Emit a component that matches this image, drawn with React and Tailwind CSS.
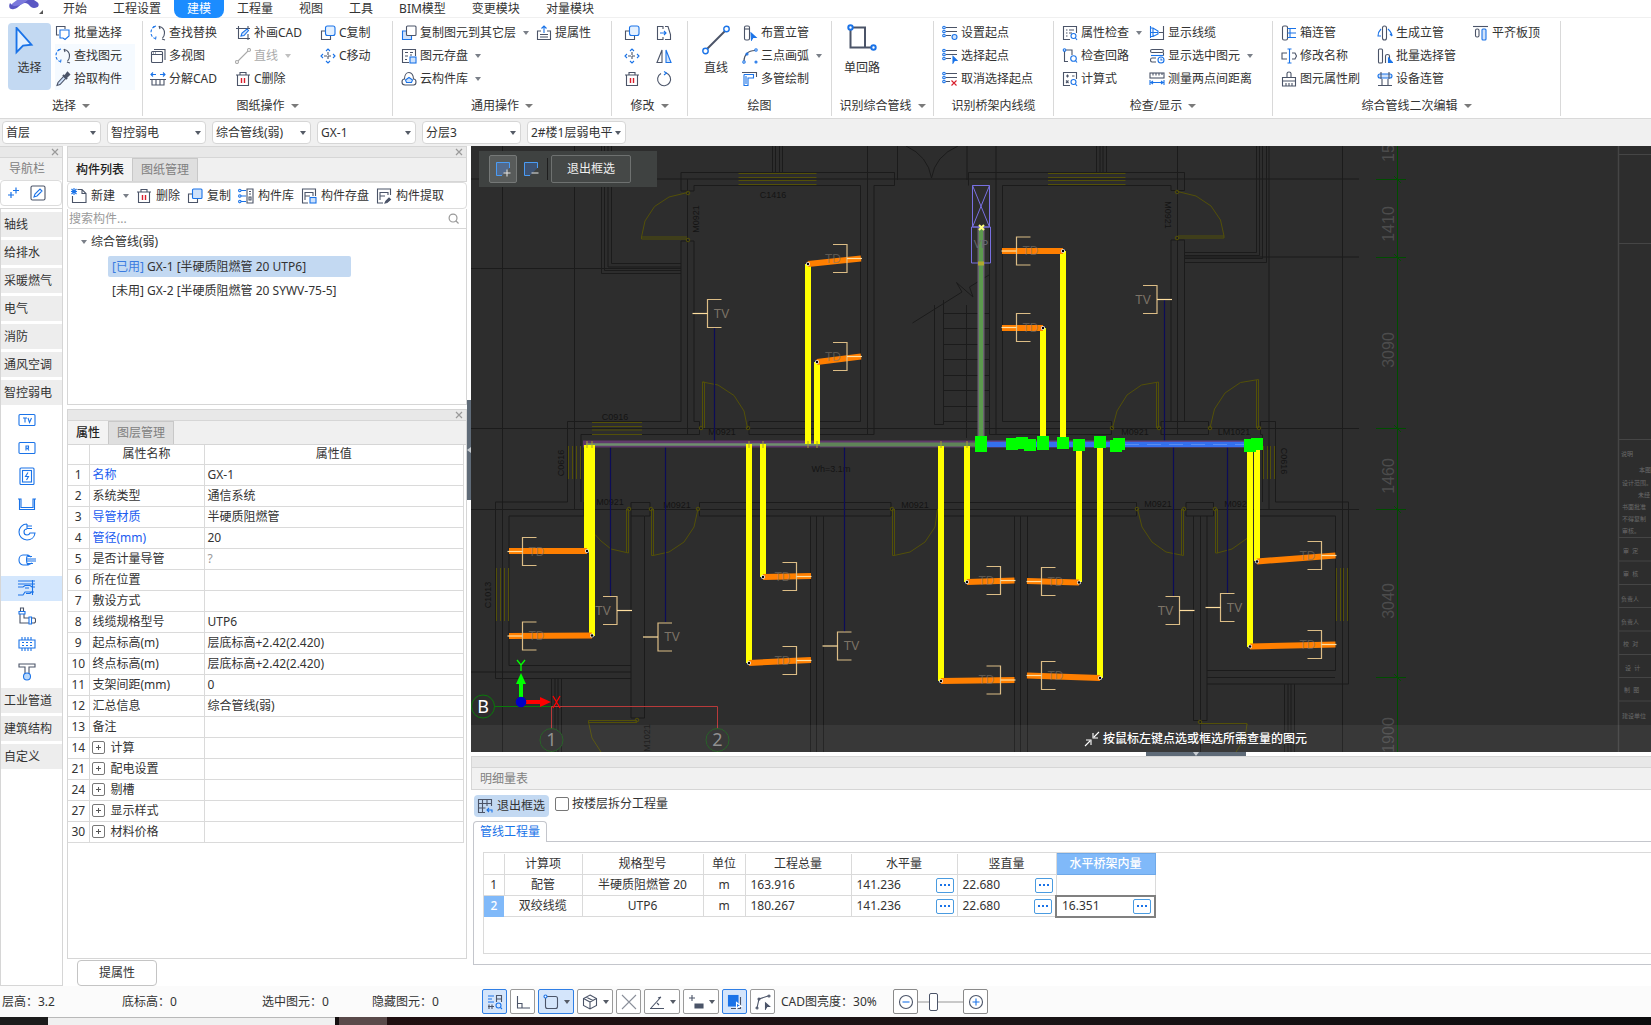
import { useState } from "react"

/* -----------------------------
   Icons (16 x 16 grid)
----------------------------- */
const G = "#4b5468"
const B = "#1a73e8"
const L = "#cfe2fb"

const GLYPHS = {
  batch: (
    <>
      <path d="M4 10H1.5V1.5H10V4" />
      <path d="M5 5h9v6l-4 3.5L8 13H5z" stroke={B} />
    </>
  ),
  find: (
    <>
      <path d="M5 1.5C2 2.5 1 5 1 7.500c0 3 1.500 5 4 6" stroke={B} strokeDasharray="3 1.500" />
      <path d="M3 2l3-1M5.500 14.500L6 11.500" stroke={B} />
      <path d="M9.500 1.500C13 2.500 14.500 5 14.500 8s-1 4-2 5M9 1l1 3M12 14l3 1" />
    </>
  ),
  dropper: (
    <>
      <path d="M2 14.500l1-3 6-6.500 2 2-6 6.500z" fill={L} />
      <path d="M8 4l4 4M10 5.500l2.500-3.500 1.500 1.500-3 3z" strokeWidth="2.200" />
    </>
  ),
  windows: (
    <>
      <path d="M4 1.500h11V12" />
      <rect x="1.500" y="3.500" width="11" height="11" rx="1" />
      <path d="M1.500 6.500h11M3 5h1M5 5h1" />
    </>
  ),
  explode: (
    <>
      <path d="M1 3.500h5M10 3.500h5M3 1.500l-2 2 2 2M13 1.500l2 2-2 2" stroke={B} />
      <path d="M0 8.500h16M2 8.500V14h12V8.500M6 8.500V14M10 8.500V14" />
    </>
  ),
  patch: (
    <>
      <path d="M1 3.500h14M3.500 1v13M13 1v2M3.500 13.500H15M13 9v6" />
      <path d="M6 11l1-3 5-4 1.500 1.500L9 10.500z" stroke={B} fill={L} />
    </>
  ),
  lineGray: (
    <>
      <path d="M3 13L13 3" stroke="#aaa" />
      <circle cx="2" cy="14" r="1.500" stroke="#aaa" />
      <circle cx="14" cy="2" r="1.500" stroke="#aaa" />
    </>
  ),
  trash: (
    <>
      <path d="M1 4h14M5 4V1.500h6V4M2.500 4v10.500h11V4" />
      <path d="M6.500 7v5M9.500 7v5" stroke="#d81e2c" strokeWidth="1.400" />
    </>
  ),
  copy: (
    <>
      <path d="M5 6H1.500v8.500h9V11" />
      <rect x="5.500" y="1" width="9.500" height="9.500" rx="2" stroke={B} fill="#e3f0ff" />
    </>
  ),
  copyDown: (
    <>
      <path d="M5 6H1.500v8.500h9V11" fill={L} stroke={B} />
      <rect x="5.500" y="1" width="9.500" height="9.500" rx="1" fill="#fff" />
    </>
  ),
  copyItem: (
    <>
      <path d="M5 6H1.500v8.500h9V11" />
      <rect x="5.500" y="1" width="9.500" height="9.500" rx="1" stroke={B} fill={L} />
    </>
  ),
  move: (
    <>
      <path d="M8 4v8M4 8h8" strokeDasharray="3 1" />
      <path d="M6 3l2-2 2 2M6 13l2 2 2-2M3 6L1 8l2 2M13 6l2 2-2 2" stroke={B} />
    </>
  ),
  saveList: (
    <>
      <path d="M8 14.500H1.500v-13h13V8M4 4.500h3M4 8h3M4 11.500h2M9 4.500h3M9 7h2" />
      <rect x="9" y="9" width="6" height="6" stroke={B} fill={L} />
    </>
  ),
  cloud: (
    <>
      <path d="M4 14h8.500c2 0 2.500-1.500 2.500-3 0-1.500-1-3-2.500-3C12.500 4 10.500 1.500 8 1.500S3.500 4 3.500 8C2 8 1 9.500 1 11s1 3 3 3z" />
      <path d="M5.500 11.500h5l1-2.500-3.500-2.500L4.500 9z" stroke={B} fill={L} />
    </>
  ),
  extract: (
    <>
      <path d="M5 6H1.500v8.500h13V6H11M4 9.500h8M4 12h8" />
      <path d="M8 8V1M5.500 3.500L8 1l2.500 2.500" stroke={B} />
    </>
  ),
  stretch: (
    <>
      <path d="M7 4V1.500H1.500v13H7V12M9 1.500h3l2.500 8v5H9" />
      <path d="M4 8h6M8 6l2 2-2 2" stroke={B} />
    </>
  ),
  mirror: (
    <>
      <path d="M6 2v12.500H1z" />
      <path d="M10 2v12.500h5z" stroke={B} fill={L} />
    </>
  ),
  rotate: (
    <>
      <path d="M10 2a6.500 6.500 0 1 1-5 .500" />
      <path d="M8 .500L10.500 2 8 4" stroke={B} />
    </>
  ),
  riser: (
    <>
      <rect x="2.500" y="1" width="5" height="14" rx="1.500" />
      <path d="M2.500 4h5" />
      <path d="M9 8l5 4.500H11L9.500 15z" fill={B} stroke={B} />
    </>
  ),
  arc: (
    <>
      <path d="M2 13C2 7 6 2.500 13 2.500" />
      <circle cx="14" cy="2" r="1.200" stroke={B} />
      <circle cx="2" cy="14" r="1.200" stroke={B} />
      <circle cx="14" cy="14" r="1" stroke={B} />
      <circle cx="5" cy="6" r="1" stroke={B} />
    </>
  ),
  multi: (
    <>
      <path d="M0 1.500h14M14.500 1v5" />
      <path d="M2 3.500v11h4V7h5.500V3.500H2M4 5v8" stroke={B} />
    </>
  ),
  setStart: (
    <>
      <path d="M4 2.500h11M4 6.500h11M4 10.500h5" />
      <circle cx="2" cy="2.500" r="1.300" stroke={B} />
      <circle cx="2" cy="6.500" r="1.300" stroke={B} />
      <circle cx="2" cy="10.500" r="1.300" stroke={B} />
      <circle cx="12.500" cy="12" r="2.500" stroke={B} fill={L} />
    </>
  ),
  pickStart: (
    <>
      <path d="M4 2.500h11M4 6.500h11M4 10.500h5" />
      <circle cx="2" cy="2.500" r="1.300" stroke={B} />
      <circle cx="2" cy="6.500" r="1.300" stroke={B} />
      <circle cx="2" cy="10.500" r="1.300" stroke={B} />
      <path d="M11 8.500l4 4h-2.500L11 15z" fill={B} stroke={B} />
    </>
  ),
  dropStart: (
    <>
      <path d="M4 2.500h11M4 6.500h11M4 10.500h4" />
      <circle cx="2" cy="2.500" r="1.300" stroke={B} />
      <circle cx="2" cy="6.500" r="1.300" stroke={B} />
      <circle cx="2" cy="10.500" r="1.300" stroke={B} />
      <path d="M9.500 9.500l5 5M14.500 9.500l-5 5" stroke="#d81e2c" />
    </>
  ),
  checkAttr: (
    <>
      <path d="M8 14.500H1.500v-13h13V8M4 5h1.500M7 5h5M4 8h1.500M7 8h3M4 11h1.500" />
      <circle cx="11.500" cy="11" r="2.500" stroke={B} />
      <path d="M13.500 13l1.500 2" stroke={B} />
    </>
  ),
  checkLoop: (
    <>
      <path d="M2.500 3v10.500H6M4 2h6v5" />
      <circle cx="2.500" cy="2" r="1.300" stroke={B} />
      <circle cx="11.500" cy="10.500" r="2.800" stroke={B} />
      <path d="M13.500 12.500l1.500 2" stroke={B} />
    </>
  ),
  calc: (
    <>
      <path d="M8 14.500H1.500v-13h13V8M4 5h3M5.500 3.500v3M10 5h2.500M4 9.500l2.500 2.500M6.500 9.500L4 12" />
      <circle cx="11.500" cy="11" r="2.500" stroke={B} />
      <path d="M13.500 13l1.500 2" stroke={B} />
    </>
  ),
  cable: (
    <>
      <path d="M14.500 1v14M1 14.500h13.500M10 7.500h4.500" />
      <path d="M1.500 1v12M4 3v8.500M1.500 3H4l5 3v3l-5 2.500H1.500M2 7.500h7" stroke={B} />
    </>
  ),
  showSel: (
    <>
      <rect x="1.500" y="1.500" width="13" height="3" rx="1.500" />
      <path d="M2 7.500h12.500" stroke={B} />
      <path d="M7 10H3c-2 0-2 4 0 4h4M14.500 4.500v3" />
      <circle cx="12" cy="12" r="3" stroke={B} />
      <path d="M12 10.500V12h1.500" stroke={B} />
    </>
  ),
  measure: (
    <>
      <rect x="1" y="2" width="14" height="5" />
      <path d="M4 2v2.500M7 2v2.500M10 2v2.500M13 2v2" />
      <path d="M1 9v5M15 9v5M2 11.500h12M4 10l-2 1.500L4 13M12 10l2 1.500-2 1.500" stroke={B} />
    </>
  ),
  boxPipe: (
    <>
      <rect x="1.500" y="1" width="5" height="14" rx="1.500" />
      <path d="M6.500 3.500H15M6.500 8H15M6.500 12.500H15M9 3.500v9" stroke={B} />
    </>
  ),
  rename: (
    <>
      <path d="M6 5H1v6h5M11 5h3l1.500 3L14 11h-3" />
      <path d="M8.500 1v14M6.500 1h4M6.500 15h4" stroke={B} />
    </>
  ),
  brush: <path d="M6 6V2.500c0-2 4-2 4 0V6M1.500 10V6.500h13V10zM1.500 10v5h13v-5M5 12v3M8 12v3M11 12v3" />,
  genRiser: (
    <>
      <rect x="5.500" y="1" width="4" height="14" rx="2" />
      <path d="M4 4C1 7 1 9 1 11h3M11 4c2 2 4 4 4 7M13 9l2 2" stroke={B} />
    </>
  ),
  batchPipe: (
    <>
      <rect x="1.500" y="1" width="4" height="14" rx="1" />
      <path d="M8.500 15V8c0-2 4-2 4 0v3" />
      <path d="M11.500 10l4 4.500h-4z" fill={B} stroke={B} />
    </>
  ),
  devicePipe: (
    <>
      <rect x="1" y="3" width="14" height="4" rx="2" stroke={B} fill={L} />
      <path d="M4 1v7M12 1v7M5 8v6M11 8v6M1 14.500h14" />
    </>
  ),
  alignTop: (
    <>
      <path d="M0 1.500h15" />
      <rect x="2.500" y="4" width="3.500" height="8" rx="1.500" />
      <rect x="9" y="4" width="4" height="11" rx="1" stroke={B} fill={L} />
    </>
  ),
  newItem: (
    <>
      <path d="M6.500 1.500H11l4 4v9H1.500V8M11 1.500v4h4" />
      <path d="M.500 1l5 5M5.500 1l-5 5M3 0v7M0 3.500h6" stroke={B} />
    </>
  ),
  library: (
    <>
      <path d="M9 1h6v14H9zM11 3.500h2M11 6h2M11 9h2v3h-2z" />
      <path d="M3 2.500h5M3 8h5M3 13.500h5" stroke={B} />
      <circle cx="1.800" cy="2.500" r="1.200" stroke={B} />
      <circle cx="1.800" cy="8" r="1.200" stroke={B} />
      <circle cx="1.800" cy="13.500" r="1.200" stroke={B} />
    </>
  ),
  store: (
    <>
      <path d="M7 15H1.500V1h13v7M4 12V4.500h8V8M4 8h5" />
      <rect x="9" y="9.500" width="6" height="5.500" stroke={B} fill={L} />
    </>
  ),
  pull: (
    <>
      <path d="M7 15H1.500V1h13v6M4 12V4.500h8V7M4 8h5" />
      <path d="M9 15l1-2 3-3 1.500 1.500-3.500 3z" fill={G} />
    </>
  ),
  exitBox: (
    <>
      <path d="M8 14.500H1.500v-13h13V8M1.500 5.500h13M1.500 10h7M5.500 1.500v13M10 1.500V8" />
      <path d="M15 14.500V12h-5M12 10l-2 2 2 2" stroke={B} />
    </>
  ),
  magnet: (
    <>
      <path d="M1 2h6M1 5h4M1 8h6" stroke={B} />
      <path d="M9.500 8V1.500h5V8M9.500 5h5M2 10.500v4.500M5 10.500v4.500M1 12.500h6" />
      <circle cx="11.500" cy="11.500" r="2.500" stroke={B} />
      <path d="M13.500 13.500l1.500 1.500" stroke={B} />
    </>
  ),
  ortho: <path d="M2.500 2v12H15M2.500 9.500H7V14" />,
  rectSel: (
    <>
      <rect x="2.500" y="2.500" width="12" height="12" rx="2" />
      <circle cx="2.500" cy="2.500" r="1.500" stroke={B} fill="#fff" />
    </>
  ),
  cube: <path d="M8 1l6.500 3.500v7L8 15l-6.500-3.500v-7zM8 8L1.500 4.500M8 8l6.500-3.500M8 8v7M4 3l7 3.500" />,
  cross: <path d="M1 1l14 14M15 1L1 15" stroke="#8a8f9a" />,
  angle: <path d="M1 14.500h14M2 14L12 3M8 9l2 2M12 3l-3 1" />,
  plusBar: (
    <>
      <path d="M1 4h6M4 1v6" />
      <path d="M7 10h8v4H7z" fill={G} />
    </>
  ),
  layerSel: (
    <>
      <path d="M4 14.500h9.500V3" />
      <rect x="1.500" y="1.500" width="9.500" height="10.500" fill={B} stroke={B} />
      <path d="M9.500 8.500l5 4h-3l-2 2.500z" fill={B} stroke="#fff" />
    </>
  ),
  polySel: (
    <>
      <path d="M2 14l2-9 9-3" />
      <circle cx="2" cy="14" r="1" />
      <circle cx="4" cy="5" r="1" />
      <circle cx="14" cy="2" r="1" />
      <path d="M10.500 9l4 3.500h-2.500L10.500 15z" fill={G} />
    </>
  ),
  zoomOut: (
    <>
      <circle cx="8" cy="8" r="6.500" />
      <path d="M4.500 8h7" stroke={B} />
    </>
  ),
  zoomIn: (
    <>
      <circle cx="8" cy="8" r="6.500" />
      <path d="M4.500 8h7M8 4.500v7" stroke={B} />
    </>
  ),
}

const NAV_GLYPHS = {
  tv: (
    <>
      <rect x="1" y="3.500" width="16" height="11" rx="1" />
      <path d="M5 7h4M7 7v4.500M10 7l1.500 4.500L13.500 7" />
    </>
  ),
  r: (
    <>
      <rect x="1" y="3.500" width="16" height="11" rx="1" />
      <path d="M8 11.500V7h2.500v2.300H8M9.500 9.500l1.500 2" />
    </>
  ),
  power: (
    <>
      <rect x="2" y="1" width="14" height="16.500" rx="1" />
      <rect x="4.500" y="3.500" width="9" height="11.500" />
      <path d="M10 5.500L7.500 9.500h3L8.500 13" />
    </>
  ),
  tray: <path d="M0 4h3v8.500h12V4h3M1.500 4v10.500h15V4" />,
  coil: <path d="M9 1c-4.500 0-8 3.500-8 8s3.500 8 8 8c4 0 7.500-2.500 8-7h-5c-.5 1.500-1.500 2-3 2-2 0-3-1.500-3-3s1-3 3-3M9 1v5M9 3h5M9 5.500h5" />,
  hand: <path d="M10 4H5C2.500 4 1 6.500 1 9s1.500 5 4 5h5M10 4c-2 2-2 8 0 10M10 5.500h4M9 8h9M9 10h9M9 12.500h6M10 4l3 2M10 14l4-2" />,
  lines: <path d="M0 2h17M0 5h17M0 8h5l2-1.500h5L14 8h3M7 9h4M0 16h5l2-3h9M8 14.500h4l2-2M14.500 1v15" />,
  elbow: (
    <>
      <path d="M2 7v9h9M6 7v4h5M2.500 5V1h3v4M14 11h2.500l1 1v3l-1 1H14" stroke={G} />
      <path d="M1 4.500h6V7H1zM11 10h2.500v7H11z" />
    </>
  ),
  chip: <path d="M1 5h16v8H1zM4 2v3M7 2v3M10 2v3M13 2v3M4 13v3M7 13v3M10 13v3M13 13v3M4 7.500h2M8 7.500h2M12 7.500h2M4 10.500h2M8 10.500h2M12 10.500h2" />,
  support: (
    <>
      <path d="M1 1h16v3h-6v7H7V4H1z" stroke={G} />
      <circle cx="9" cy="13.500" r="3.500" fill="#b9d8fb" />
    </>
  ),
}

function Icon({ name }) {
  return (
    <svg viewBox="0 0 16 16" className="h-4 w-4 shrink-0" fill="none" stroke={G} strokeWidth="1.100">
      {GLYPHS[name]}
    </svg>
  )
}

function Caret({ className = "h-1 w-1.5 text-[#7a7f88]" }) {
  return (
    <svg viewBox="0 0 6 4" preserveAspectRatio="none" className={`shrink-0 ${className}`} fill="currentColor">
      <path d="M0 0h6L3 4z" />
    </svg>
  )
}

function CloseX() {
  return (
    <button aria-label="关闭" className="flex h-2 w-2 items-center text-[#9a9a9a]">
      <svg viewBox="0 0 8 8" className="h-2 w-2" stroke="currentColor" strokeWidth="1.200">
        <path d="M1 1l6 6M7 1L1 7" />
      </svg>
    </button>
  )
}

/* -----------------------------
   Ribbon
----------------------------- */
const MENU = ["开始", "工程设置", "建模", "工程量", "视图", "工具", "BIM模型", "变更模块", "对量模块"]

function Tool({ icon, label, menu, disabled, className = "" }) {
  return (
    <button
      disabled={disabled}
      aria-label={label || icon}
      className={`flex h-[23px] items-center gap-[3px] whitespace-nowrap text-left ${disabled ? "text-[#aaaaaa]" : ""} ${className}`}
    >
      <Icon name={icon} />
      {label && <span>{label}</span>}
      {menu && <Caret className={disabled ? "ml-1 h-1 w-1.5 text-[#c0c0c0]" : "ml-1 h-1 w-1.5 text-[#7a7f88]"} />}
    </button>
  )
}

function Group({ title, menu, width, children }) {
  return (
    <section className={`flex shrink-0 flex-col pt-[3px] ${width}`}>
      <div className="flex h-[95px] flex-col justify-between border-r border-[#d9d9d9]">
        <div className="flex h-[69px]">{children}</div>
        <div className="flex h-5 items-center justify-center gap-[6px]">
          {title}
          {menu && <Caret className="h-1 w-2 text-[#7a7a7a]" />}
        </div>
      </div>
    </section>
  )
}

function Col({ width = "", tools }) {
  return (
    <div className={`flex shrink-0 flex-col ${width}`}>
      {tools.map((t) => (
        <Tool key={t.icon + (t.label || "")} {...t} />
      ))}
    </div>
  )
}

function Ribbon() {
  return (
    <div className="flex h-[101px] overflow-hidden border-b border-[#d9d9d9] bg-white">
      <Group title="选择" menu width="w-[143px]">
        <button className="ml-2 mt-0.5 flex h-[67px] w-[43px] shrink-0 flex-col items-center justify-between rounded bg-[#c3d9f2] pb-3.5 pt-1">
          <svg viewBox="0 0 24 30" className="ml-1 h-7 w-6 self-start" fill="#e3f0ff" stroke={B} strokeWidth="2">
            <path d="M4 1l16 18-9 1-7 7z" />
          </svg>
          <span className="leading-[16px]">选择</span>
        </button>
        <div className="ml-1 flex flex-col">
          <Tool icon="batch" label="批量选择" />
          <Tool icon="find" label="查找图元" className="w-20 bg-[#f5faff]" />
          <Tool icon="dropper" label="拾取构件" className="w-20 bg-[#f5faff]" />
        </div>
      </Group>

      <Group title="图纸操作" menu width="w-[250px]">
        <Col
          width="ml-[7px] w-[85px]"
          tools={[
            { icon: "find", label: "查找替换" },
            { icon: "windows", label: "多视图" },
            { icon: "explode", label: "分解CAD" },
          ]}
        />
        <Col
          width="w-[85px]"
          tools={[
            { icon: "patch", label: "补画CAD" },
            { icon: "lineGray", label: "直线", menu: true, disabled: true },
            { icon: "trash", label: "C删除" },
          ]}
        />
        <Col
          tools={[
            { icon: "copy", label: "C复制" },
            { icon: "move", label: "C移动" },
          ]}
        />
      </Group>

      <Group title="通用操作" menu width="w-[219px]">
        <Col
          width="ml-2 w-[135px]"
          tools={[
            { icon: "copyDown", label: "复制图元到其它层", menu: true },
            { icon: "saveList", label: "图元存盘", menu: true },
            { icon: "cloud", label: "云构件库", menu: true },
          ]}
        />
        <Col tools={[{ icon: "extract", label: "提属性" }]} />
      </Group>

      <Group title="修改" menu width="w-[76px]">
        <Col width="ml-3 w-8" tools={[{ icon: "copy" }, { icon: "move" }, { icon: "trash" }]} />
        <Col tools={[{ icon: "stretch" }, { icon: "mirror" }, { icon: "rotate" }]} />
      </Group>

      <Group title="绘图" width="w-[144px]">
        <button className="ml-[9px] flex w-[38px] shrink-0 flex-col items-center justify-between pb-3.5 pt-1">
          <svg viewBox="0 0 28 30" className="h-[30px] w-7" fill="none" stroke={G} strokeWidth="2">
            <path d="M5 24L23 6" />
            <circle cx="3.500" cy="26" r="2.700" stroke={B} strokeWidth="1.400" />
            <circle cx="24.500" cy="4" r="2.700" stroke={B} strokeWidth="1.400" />
          </svg>
          <span className="leading-[16px]">直线</span>
        </button>
        <Col
          width="ml-[7px]"
          tools={[
            { icon: "riser", label: "布置立管" },
            { icon: "arc", label: "三点画弧", menu: true },
            { icon: "multi", label: "多管绘制" },
          ]}
        />
      </Group>

      <Group title="识别综合管线" menu width="w-[102px]">
        <button className="ml-[9px] flex w-[42px] shrink-0 flex-col items-center justify-between pb-3.5 pt-[3px]">
          <svg viewBox="0 0 30 30" className="h-[30px] w-[30px]" fill="none" stroke={G} strokeWidth="2">
            <path d="M3.500 3v20.500H26M3.500 3.500h14.500v20" />
            <circle cx="3.500" cy="3.500" r="2.200" stroke={B} fill="#fff" />
            <circle cx="26.500" cy="23.500" r="2.200" stroke={B} fill="#fff" />
          </svg>
          <span className="leading-[16px]">单回路</span>
        </button>
      </Group>

      <Group title="识别桥架内线缆" width="w-[120px]">
        <Col
          width="ml-2"
          tools={[
            { icon: "setStart", label: "设置起点" },
            { icon: "pickStart", label: "选择起点" },
            { icon: "dropStart", label: "取消选择起点" },
          ]}
        />
      </Group>

      <Group title="检查/显示" menu width="w-[219px]">
        <Col
          width="ml-2 w-[87px]"
          tools={[
            { icon: "checkAttr", label: "属性检查", menu: true },
            { icon: "checkLoop", label: "检查回路" },
            { icon: "calc", label: "计算式" },
          ]}
        />
        <Col
          tools={[
            { icon: "cable", label: "显示线缆" },
            { icon: "showSel", label: "显示选中图元", menu: true },
            { icon: "measure", label: "测量两点间距离" },
          ]}
        />
      </Group>

      <Group title="综合管线二次编辑" menu width="w-[288px]">
        <Col
          width="ml-2 w-24"
          tools={[
            { icon: "boxPipe", label: "箱连管" },
            { icon: "rename", label: "修改名称" },
            { icon: "brush", label: "图元属性刷" },
          ]}
        />
        <Col
          width="w-24"
          tools={[
            { icon: "genRiser", label: "生成立管" },
            { icon: "batchPipe", label: "批量选择管" },
            { icon: "devicePipe", label: "设备连管" },
          ]}
        />
        <Col tools={[{ icon: "alignTop", label: "平齐板顶" }]} />
      </Group>
    </div>
  )
}

const FILTERS = [
  ["楼层", "首层"],
  ["专业", "智控弱电"],
  ["构件类型", "综合管线(弱)"],
  ["构件", "GX-1"],
  ["分层", "分层3"],
  ["图纸", "2#楼1层弱电平"],
]

function FilterBar() {
  return (
    <div className="flex h-[27px] items-center gap-[6px] bg-[#f0f0f0] pl-0.5">
      {FILTERS.map(([name, value]) => (
        <div key={name} className="relative">
          <select
            aria-label={name}
            className="h-[23px] w-[99px] appearance-none rounded border border-[#d6d6d6] bg-white pl-[3px] pr-3 text-[12px] leading-[16px]"
          >
            <option>{value}</option>
          </select>
          <span className="pointer-events-none absolute right-[5px] top-[10px] flex">
            <Caret className="h-1 w-1.5 text-[#555b66]" />
          </span>
        </div>
      ))}
    </div>
  )
}

/* -----------------------------
   Navigation column
----------------------------- */
const NAV_TOP = ["轴线", "给排水", "采暖燃气", "电气", "消防", "通风空调", "智控弱电"]
const NAV_BOTTOM = ["工业管道", "建筑结构", "自定义"]

function NavColumn() {
  return (
    <nav className="flex w-[63px] shrink-0 flex-col border-r border-[#d6d6d6] bg-white">
      <div className="flex h-3 items-center justify-end border-y border-[#d6d6d6] bg-[#e8e8e8] pr-[3px]">
        <CloseX />
      </div>
      <div className="h-[22px] bg-[#f0f0f0] pl-[9px] leading-[22px] text-[#808080]">导航栏</div>
      <div className="flex h-[26px] items-center gap-[9px] rounded border border-[#dcdcdc] pl-[6px]">
        <button aria-label="展开" className="flex">
          <svg viewBox="0 0 14 14" className="h-3.5 w-3.5" stroke={B} strokeWidth="1.200">
            <path d="M1 9h6M4 6v6M6 4.500h6M9 1.500v6" />
          </svg>
        </button>
        <button aria-label="编辑" className="flex">
          <svg viewBox="0 0 16 16" className="h-4 w-4" fill="none" stroke={G} strokeWidth="1.100">
            <rect x="1" y="1" width="14" height="14" rx="1.500" />
            <path d="M4 12l1-3 5-5 2 2-5 5z" stroke={B} />
          </svg>
        </button>
      </div>
      <div className="mt-0.5 flex flex-1 flex-col gap-[3px] border-b border-l border-t border-[#d6d6d6] pt-[3px]">
        {NAV_TOP.map((n) => (
          <button key={n} className="h-[25px] bg-[#ededed] pl-[3px] text-left">{n}</button>
        ))}
        {Object.keys(NAV_GLYPHS).map((k) => (
          <button
            key={k}
            aria-label={k}
            className={`flex h-[25px] items-center pb-0.5 pl-[17px] ${k === "lines" ? "bg-[#d4e7fd]" : ""}`}
          >
            <svg viewBox="0 0 18 18" className="h-[18px] w-[18px]" fill="none" stroke={B} strokeWidth="1.100">
              {NAV_GLYPHS[k]}
            </svg>
          </button>
        ))}
        {NAV_BOTTOM.map((n) => (
          <button key={n} className="h-[25px] bg-[#ededed] pl-[3px] text-left">{n}</button>
        ))}
      </div>
    </nav>
  )
}

/* -----------------------------
   Component list + properties
----------------------------- */
function PanelTabs({ tabs }) {
  return (
    <>
      <div className="flex h-3 items-center justify-end border border-[#d6d6d6] bg-[#e8e8e8] pr-[3px]">
        <CloseX />
      </div>
      <div className="flex h-6 border-x border-b border-[#d6d6d6] bg-[#f0f0f0]">
        {tabs.map((t, i) => (
          <button
            key={t}
            className={
              i === 0
                ? "border-r border-[#c8c8c8] bg-[#f3f3f3] px-2 font-medium text-[#222]"
                : "border-r border-t border-[#c8c8c8] bg-[#dfdfdf] px-2 text-[#808080]"
            }
          >
            {t}
          </button>
        ))}
      </div>
    </>
  )
}

function ComponentPanel() {
  return (
    <section>
      <PanelTabs tabs={["构件列表", "图纸管理"]} />
      <div className="flex h-[27px] items-center gap-[7px] rounded border border-[#dcdcdc] pl-[3px]">
        <button className="flex items-center gap-1">
          <Icon name="newItem" />
          新建
          <Caret className="ml-1 h-1 w-1.5 text-[#7a7f88]" />
        </button>
        <button className="flex items-center gap-1"><Icon name="trash" />删除</button>
        <button className="flex items-center gap-1"><Icon name="copyItem" />复制</button>
        <button className="flex items-center gap-1"><Icon name="library" />构件库</button>
        <button className="flex items-center gap-1"><Icon name="store" />构件存盘</button>
        <button className="flex items-center gap-1"><Icon name="pull" />构件提取</button>
      </div>
      <div className="flex h-5 items-center border-x border-b border-[#d6d6d6] pr-[7px]">
        <input
          aria-label="搜索构件"
          placeholder="搜索构件..."
          className="h-[18px] flex-1 pl-px text-[12px] outline-none placeholder:text-[#9a9a9a]"
        />
        <svg viewBox="0 0 12 12" className="h-[11px] w-[11px]" fill="none" stroke="#999" strokeWidth="1.300">
          <circle cx="5.500" cy="5.500" r="4.300" />
          <path d="M8.500 8.500l3 3" />
        </svg>
      </div>
      <ul className="h-44 border-x border-b border-[#d6d6d6] pt-px">
        <li className="flex h-6 items-center gap-1 pl-[13px]">
          <Caret />
          综合管线(弱)
        </li>
        <li className="flex h-6 items-center pl-10">
          <div className="w-[243px] rounded-xs bg-[#c3d9f2] pl-1 leading-[21px]">
            <span className="text-[#3a7be0]">[已用]</span> GX-1 [半硬质阻燃管 20 UTP6]
          </div>
        </li>
        <li className="flex h-6 items-center pl-10">
          <div className="pl-1 leading-[21px]">[未用] GX-2 [半硬质阻燃管 20 SYWV-75-5]</div>
        </li>
      </ul>
    </section>
  )
}

const PROPS = [
  { no: 1, name: "名称", value: "GX-1", key: true },
  { no: 2, name: "系统类型", value: "通信系统" },
  { no: 3, name: "导管材质", value: "半硬质阻燃管", key: true },
  { no: 4, name: "管径(mm)", value: "20", key: true },
  { no: 5, name: "是否计量导管", value: "?", muted: true },
  { no: 6, name: "所在位置", value: "" },
  { no: 7, name: "敷设方式", value: "" },
  { no: 8, name: "线缆规格型号", value: "UTP6" },
  { no: 9, name: "起点标高(m)", value: "层底标高+2.42(2.420)" },
  { no: 10, name: "终点标高(m)", value: "层底标高+2.42(2.420)" },
  { no: 11, name: "支架间距(mm)", value: "0" },
  { no: 12, name: "汇总信息", value: "综合管线(弱)" },
  { no: 13, name: "备注", value: "" },
  { no: 14, name: "计算", group: true },
  { no: 21, name: "配电设置", group: true },
  { no: 24, name: "剔槽", group: true },
  { no: 27, name: "显示样式", group: true },
  { no: 30, name: "材料价格", group: true },
]

function PropertyPanel() {
  return (
    <section className="mt-1 flex flex-1 flex-col">
      <PanelTabs tabs={["属性", "图层管理"]} />
      <div className="flex-1 border-x border-b border-[#d6d6d6] pr-[2px]">
        <table className="w-full table-fixed border-collapse leading-[16px]">
          <colgroup>
            <col className="w-[21px]" />
            <col className="w-[115px]" />
            <col />
          </colgroup>
          <thead>
            <tr className="h-[19px]">
              <th className="border-b border-r border-[#dadada]" />
              <th className="border-b border-r border-[#dadada] font-normal">属性名称</th>
              <th className="border-b border-r border-[#dadada] font-normal">属性值</th>
            </tr>
          </thead>
          <tbody>
            {PROPS.map((p) => (
              <tr key={p.no} className="h-[21px]">
                <td className="border-b border-r border-[#dadada] text-center">{p.no}</td>
                <td
                  className={`border-b border-r border-[#dadada] ${p.group ? "pl-0.5" : "pl-[3px]"} ${p.key ? "text-[#1a5cf0]" : ""}`}
                >
                  {p.group ? (
                    <span className="flex items-center gap-[6px]">
                      <button
                        aria-label={`展开${p.name}`}
                        className="flex h-[13px] w-[13px] items-center justify-center rounded-xs border border-[#777]"
                      >
                        <svg viewBox="0 0 7 7" className="h-[7px] w-[7px]" stroke="#555" strokeWidth="1">
                          <path d="M1 3.500h5M3.500 1v5" />
                        </svg>
                      </button>
                      {p.name}
                    </span>
                  ) : (
                    p.name
                  )}
                </td>
                <td className={`border-b border-r border-[#dadada] pl-[3px] ${p.muted ? "text-[#999]" : ""}`}>{p.value}</td>
              </tr>
            ))}
          </tbody>
        </table>
      </div>
      <div className="flex h-[27px] items-end pl-[10px]">
        <button className="h-[26px] w-20 rounded border border-[#c4c4c4] bg-white">提属性</button>
      </div>
    </section>
  )
}

/* -----------------------------
   Drawing area
----------------------------- */
const WALLS = [
  // axis grid
  "M471 179H1359M471 268.500H681M1185 257H1359M471 428.500H1359M471 509.500H1359",
  "M502.500 146V752M574.500 146V509M1342.500 146V752M1269 146V509",
  "M687.500 179V435M867.500 146V435M996 146V435M1177.500 146V435M1200.500 516V752",
  // balconies
  "M601.500 146V273.500H681M604.500 146V270.500H681M608 146V267H681M611.500 146V263.500H681",
  "M1266.500 146V262.500H1184M1262.500 146V258.500H1184M1259.500 146V255.500H1184M1256.500 146V252.500H1184",
  "M772.500 146V172M775.500 146V172M779.500 146V172M782.500 146V172",
  "M1096.500 146V172M1100 146V172M1103 146V172M1106.500 146V172",
  // upper left room
  "M681 191V172.500H894.500V185.500H874V434.500H749V421.500H860.500V185.500H694V191H681",
  "M681 421.500V241H694V421.500H699.500V434.500H581V502M681 421.500H567.500V502H495.500V678.500H631",
  "M897.500 146V180M967 146V180M906 146Q928 156 931.500 178Q935 156 958 146",
  // upper right room
  "M968.500 185.500V172.500H1184.500V190.500H1171V185.500H1002.500V421.500H1111.500V434.500H989.500V185.500",
  "M1171 421.500V240H1184.500V421.500M1161 421.500H1208.500V434.500H1161ZM1260.500 421.500H1275.500V502H1348.500V684H1207",
  "M1262.500 434.500V502M1260.500 421.500V434.500H1262",
  // lower rooms
  "M584 502V516H509V665.500H631M471 672H631M631 718V502.500H650V516H644.500V718H631M631 516H644",
  "M699.500 502.500H891V516H699.500ZM810.500 516V752M816.500 516V752M823.500 516V752",
  "M941 502.500H1136.500V516H941ZM1014.500 516V752M1020.500 516V752M1027.500 516V752",
  "M1186 502.500H1213.500V516H1186ZM1193.500 516V720.500H1207V516",
  "M1260 516H1335.500V670.500H1207M1207 677.500H1335",
  "M551.500 678V752M555 678V752M558 678V752M561.500 678V752",
  "M1284.500 684V752M1288 684V752M1291 684V752M1294.500 684V752",
  // stairs
  "M934.500 305V424.500H943.500V300M966.500 305V438",
  "M943 313.500H989M943 328.500H989M943 344.500H989M943 359.500H989M943 375.500H989M943 390.500H989M943 406.500H989M943 421.500H989",
  "M912.500 323L962 292L956.500 282.500L973 297L969.500 287L989 275",
]

const OLIVE = [
  // windows
  "M738.500 173.500H816.500M738.500 177.500H816.500M738.500 180.500H816.500M738.500 184.500H816.500",
  "M1048 173.500H1125.500M1048 177.500H1125.500M1048 180.500H1125.500M1048 184.500H1125.500",
  "M592 422.500H642M592 426.500H642M592 430H642M592 434.500H642",
  "M568.500 446V479M572.500 446V479M576.500 446V479M580.500 446V479",
  "M1263.500 446V479M1267.500 446V479M1270.500 446V479M1274.500 446V479",
  "M496.500 568V621M500.500 568V621M504.500 568V621M508.500 568V621",
  "M1336.500 568V621M1340.500 568V621M1343.500 568V621M1347.500 568V621",
  // doors
  "M687 237H641.500V239H687M641.500 237L645 221L654.500 206.500L669 197L687.500 192.500",
  "M702.500 428V382H704.500V428M702.500 382L718 385L734 395.500L744 411L747.500 428",
  "M1177.500 191.500L1196 196L1211 206L1220.500 220L1224 236V238H1178M1178 236H1224",
  "M1112.500 428L1117 411L1127 395L1141.500 385L1158.500 382V428M1156.500 382V428",
  "M1210 428L1214.500 409L1225 393L1240.500 382.500L1258.500 379.500V428M1256.500 380V428",
  "M595 534.500L601 541L611 549L628.500 553V509M626.500 553V509",
  "M651.500 509V555.500H653.500V509M653 555.500L669 552L684 542L694 527L698 509",
  "M892.500 509V555.500H894.500V509M894 555.500L910 552L925 542L935 527L937.500 509",
  "M1137.500 509L1142 527L1152 542L1166 552L1183.500 555.500V509M1181.500 555V509",
  "M1215.500 509V553H1217.500V509M1217 553L1232 549L1249 537",
  "M637 720.500H588.500V722.500H637M588.500 722L592 738L601 752",
  "M1200 723.500H1247V725M1247 724L1245 738L1236 752",
]

const HINGES = [
  [688, 193], [688, 240], [701, 428], [748, 428], [1177, 192], [1177, 238], [1112, 428], [1159, 428],
  [1210, 428], [1259, 428], [629, 509], [651, 509], [698, 509], [892, 509], [1137, 509], [1184, 509],
  [1215, 509], [637, 720], [1200, 722],
]

const CAD_LABELS = [
  ["C1416", 773, 198, 0], ["M0921", 699, 219, -90], ["C0916", 615, 420, 0], ["M0921", 722, 435, 0],
  ["C0616", 564, 463, -90], ["M0921", 610, 505, 0], ["M0921", 677, 508, 0], ["M0921", 915, 508, 0],
  ["C1013", 491, 595, -90], ["Wh=3.1m", 831, 472, 0], ["M0921", 1158, 507, 0], ["M0921", 1238, 507, 0],
  ["M0921", 1135, 435, 0], ["LM1021", 1234, 435, 0], ["M0921", 1165, 215, 90], ["C0616", 1281, 461, 90],
  ["M1021", 650, 738, -90],
]

const NAVY = "M714.500 328V442M610.500 446V596M665.500 446V622M844.500 446V632M1164.500 300V442M1173.500 446V596M1227.500 446V593"

// x, y1, y2
const YELLOW = [
  [808, 264, 444], [817, 362, 444], [1063, 251, 440], [1043, 328, 440], [587, 445, 551], [592, 445, 636],
  [749, 444, 663], [763, 444, 577], [941, 446, 681], [967, 446, 582], [1079, 446, 582], [1100, 444, 678],
  [1250, 446, 647], [1257, 446, 561],
]

// node x/y, far x/y
const ORANGE = [
  [808, 264, 861, 258.5], [817, 362, 861, 356.5], [1063, 251, 1002, 251], [1043, 328, 1002, 328],
  [587, 551, 509, 551], [592, 635.5, 509, 636], [763, 577, 811, 576], [749, 663, 811, 660],
  [967, 582, 1014.5, 580.5], [941, 681, 1014.5, 680], [1079, 582.5, 1027, 581], [1100, 678, 1027, 675.5],
  [1257, 561.5, 1335.5, 555.5], [1250, 646.5, 1335.5, 644.5],
]

// spine x, y, opening direction, label
const DEVICES = [
  [847, 258.5, -1, "TD"], [847, 356.5, -1, "TD"], [1016.5, 251, 1, "TD"], [1016.5, 327.5, 1, "TD"],
  [522.5, 551.5, 1, "TD"], [522.5, 636, 1, "TD"], [796.5, 576.5, -1, "TD"], [796.5, 660.5, -1, "TD"],
  [1000.5, 580.5, -1, "TD"], [1000.5, 680, -1, "TD"], [1041.5, 581.5, 1, "TD"], [1041.5, 675.5, 1, "TD"],
  [1321.5, 555.5, -1, "TD"], [1321.5, 644.5, -1, "TD"], [707.5, 313.5, 1, "TV"], [1157, 299.5, -1, "TV"],
  [617, 610.5, -1, "TV"], [658, 637, 1, "TV"], [837.5, 646, 1, "TV"], [1179.5, 610.5, -1, "TV"],
  [1220.5, 607.5, 1, "TV"],
]

const GRIPS = [
  [975, 436, 16], [1006, 438, 12], [1016, 437, 12], [1024, 439, 12], [1037, 436, 14], [1057, 437, 12],
  [1073, 439, 12], [1094, 436, 12], [1110, 440, 12], [1113, 438, 12], [1244, 439, 13], [1251, 438, 12],
]

const DIMS = [["15", 153], ["1410", 224], ["3090", 350], ["1460", 476], ["3040", 601], ["1900", 735]]

const TITLE_LINES = [154.5, 243.5, 439.5, 537.5, 561, 584.5, 607.5, 631, 654.5, 677.5, 701]
const TITLE_TEXT = [
  ["说明", 1621, 456], ["本图", 1639, 472], ["设计范围。", 1622, 485], ["未经", 1638, 497],
  ["书面批准", 1622, 509], ["不得复制", 1622, 521], ["审核。", 1622, 533], ["审  定", 1623, 553],
  ["审  核", 1623, 576], ["负责人", 1621, 601], ["负责人", 1621, 624], ["校  对", 1623, 646],
  ["设  计", 1625, 670], ["制  图", 1624, 692], ["建设单位", 1622, 718],
]

function Drawing() {
  return (
    <svg
      viewBox="471 146 1180 606"
      preserveAspectRatio="xMinYMin slice"
      className="h-full w-full font-['Liberation_Sans_Narrow','Liberation_Sans','Noto_Sans_CJK_SC',sans-serif]"
      fill="none"
    >
      <g stroke="#1b1b1b" strokeWidth="1">
        {WALLS.map((d) => <path key={d} d={d} />)}
      </g>
      <g stroke="#535008" strokeWidth="1">
        {OLIVE.map((d) => <path key={d} d={d} />)}
        {HINGES.map(([x, y]) => <circle key={`${x}-${y}`} cx={x} cy={y} r="1.800" />)}
      </g>
      <g fill="#141414" fontSize="9" textAnchor="middle">
        {CAD_LABELS.map(([t, x, y, r], i) => (
          <text key={i} x={x} y={y} transform={r ? `rotate(${r} ${x} ${y})` : undefined}>{t}</text>
        ))}
      </g>
      <path d={NAVY} stroke="#0c0c58" strokeWidth="1.200" />

      {/* dimension chain */}
      <path
        d="M1397.500 146V752M1376 179.500h30M1376 257.500h30M1376 428.500h30M1376 509.500h30M1376 677.500h30M1394 176l7 7M1394 254l7 7M1394 425l7 7M1394 506l7 7M1394 674l7 7"
        stroke="#004d00"
      />
      <g fill="#4c4c4c" fontSize="16" textAnchor="middle">
        {DIMS.map(([t, y]) => (
          <text key={t} x="1394" y={y} transform={`rotate(-90 1394 ${y})`}>{t}</text>
        ))}
      </g>

      {/* title block */}
      <path d="M1618.500 146V752" stroke="#454545" strokeWidth="1.500" />
      <g stroke="#454545">
        {TITLE_LINES.map((y) => <path key={y} d={`M1618 ${y}H1651`} />)}
      </g>
      <g fill="#6a6a6a" fontSize="6">
        {TITLE_TEXT.map(([t, x, y]) => <text key={y} x={x} y={y} xmlSpace="preserve">{t}</text>)}
      </g>

      {/* trunk */}
      <path d="M583 444H981" stroke="#60396b" strokeWidth="7" />
      <path d="M586 444.500H981" stroke="#6e8f6e" strokeWidth="2.500" />
      <path d="M820 444.500H981" stroke="#5f8458" strokeWidth="4" />
      <path d="M981 227V440" stroke="#6a6570" strokeWidth="7" />
      <path d="M981 227V440" stroke="#5c9a4e" strokeWidth="4" />
      <path d="M984 444H1260" stroke="#5c4690" strokeWidth="7" />
      <path d="M984 444.500H1260" stroke="#3470ee" strokeWidth="5" />
      <path d="M1125 444.500H1246" stroke="#5c8cf2" strokeDasharray="14 8" />
      {YELLOW.map(([x, a, b]) => (
        <g key={x}>
          <path d={`M${x} ${a}V${b}`} stroke="#ffff00" strokeWidth="6" />
          <path d={`M${x} 441v7`} stroke="#a8a030" />
        </g>
      ))}
      {ORANGE.map(([x1, y1, x2, y2]) => (
        <g key={`${x1}-${y1}`}>
          <path d={`M${x1} ${y1}L${x2} ${y2}`} stroke="#ff7f00" strokeWidth="6" />
          <circle cx={x1} cy={y1} r="2" fill="#eee" />
          <circle cx={x1} cy={y1} r="1.200" fill="#000" />
        </g>
      ))}
      {DEVICES.map(([x, y, dir, t], i) => (
        <g key={i}>
          <text x={x + 14 * dir} y={y + 4} fill="#7d7468" fillOpacity={t === "TD" ? 0.6 : 1} fontSize="12" textAnchor="middle">{t}</text>
          <path d={`M${x + 14 * dir} ${y - 14}H${x}V${y + 14}H${x + 14 * dir}`} stroke="#dcbd86" strokeWidth="1.200" />
          <path d={`M${x} ${y}H${x - 15 * dir}`} stroke="#ffdfa0" strokeWidth="1.200" />
        </g>
      ))}
      <g fill="#00ff00">
        {GRIPS.map(([x, y, h]) => <rect key={x} x={x} y={y} width="12" height={h} />)}
      </g>

      {/* distribution box */}
      <path d="M972.500 185.500H989.500V227H972.500ZM972.500 185.500L989.500 227M989.500 185.500L972.500 227M971.500 227H990.500V263H971.500Z" stroke="#7870e0" />
      <path d="M979 225l5 5M984 225l-5 5" stroke="#ffff80" strokeWidth="2" />
      <path d="M978 263.500h6" stroke="#b0a830" strokeWidth="4" />
      <text x="981" y="248" fill="#6a6a72" fontSize="11" textAnchor="middle">VP</text>

      {/* axis bubbles and UCS */}
      <path d="M495 706.500H552" stroke="#0a7a0a" />
      <path d="M551.500 752V706.500H717.500V752" stroke="#b83a3a" />
      <circle cx="483" cy="706.500" r="11.500" stroke="#0a7a0a" />
      <circle cx="551.500" cy="740" r="11.500" stroke="#1e5a1e" fill="#2d2d2d" />
      <circle cx="717.500" cy="740" r="11.500" stroke="#1e5a1e" fill="#2d2d2d" />
      <g fontSize="18" textAnchor="middle" className="font-['Noto_Sans',sans-serif]">
        <text x="483" y="713" fill="#fff">B</text>
        <text x="551.500" y="746" fill="#8a8a8a">1</text>
        <text x="717.500" y="746" fill="#8a8a8a">2</text>
      </g>
      <path d="M521 697V684" stroke="#00ff00" strokeWidth="4" />
      <path d="M521 673l5 11h-10z" fill="#00ff00" />
      <path d="M526 702H540" stroke="#ff0000" strokeWidth="4" />
      <path d="M551 702l-11-5v10z" fill="#ff0000" />
      <circle cx="521" cy="702" r="5.300" fill="#0000c8" />
      <path d="M517 660l4 5v6M525 660l-4 5" stroke="#00ff00" strokeWidth="1.300" />
      <path d="M553 696l7 12M560 696l-7 12" stroke="#ff0000" strokeWidth="1.300" />
    </svg>
  )
}

function Viewport() {
  return (
    <section className="relative min-h-0 flex-1 overflow-hidden bg-[#2d2d2d]">
      <div className="absolute inset-0">
        <Drawing />
      </div>

      <div className="absolute left-2 top-[5px] flex h-9 w-[178px] items-center bg-[#3f4241] pl-[10px]">
        <button aria-label="加选" className="flex h-7 w-7 items-center justify-center rounded-xs border border-[#757877] bg-[#585b5a]">
          <svg viewBox="0 0 16 16" className="h-4 w-4" fill="none" stroke="#4a9cf5">
            <path d="M7 14.500H1.500v-13h13V7" fill="#536a8c" />
            <path d="M8.500 12h7M12 8.500v7" stroke="#e8e8e8" />
          </svg>
        </button>
        <button aria-label="减选" className="flex h-7 w-7 items-center justify-center">
          <svg viewBox="0 0 16 16" className="h-4 w-4" fill="none" stroke="#4a9cf5">
            <path d="M7 14.500H1.500v-13h13V7" fill="#3e5372" />
            <path d="M8.500 12h7" stroke="#e8e8e8" />
          </svg>
        </button>
        <span className="ml-0.5 mr-[3px] h-[22px] w-px bg-[#1e1e1e]" />
        <button className="h-7 w-20 rounded-xs border border-[#6e7170] bg-[#454847] text-[#f0f0f0]">退出框选</button>
      </div>

      <div className="absolute inset-x-0 bottom-0 flex h-[27px] items-center gap-[3px] bg-white/5 pl-[613px] text-white">
        <svg viewBox="0 0 16 16" className="h-4 w-4" fill="none" stroke="#fff" strokeWidth="1.100">
          <path d="M15 1l-5 5M9 2v5h5M1 15l5-5M2 9h5v5" />
        </svg>
        <span className="whitespace-nowrap font-medium">按鼠标左键点选或框选所需查量的图元</span>
      </div>
    </section>
  )
}

/* -----------------------------
   Quantity detail
----------------------------- */
const QTY = [
  { no: 1, item: "配管", spec: "半硬质阻燃管 20", total: "163.916", horizontal: "141.236", vertical: "22.680" },
  { no: 2, item: "双绞线缆", spec: "UTP6", total: "180.267", horizontal: "141.236", vertical: "22.680", tray: "16.351" },
]

function MoreButton() {
  return (
    <button aria-label="更多" className="flex h-[15px] w-[18px] items-center justify-center rounded-xs border border-[#4a9be0] bg-white">
      <svg viewBox="0 0 10 2" className="h-0.5 w-2.5" fill={B}>
        <path d="M0 0h2v2H0zM4 0h2v2H4zM8 0h2v2H8z" />
      </svg>
    </button>
  )
}

function MoreCell({ value }) {
  return (
    <div className="flex items-center justify-between pl-[5px] pr-[3px]">
      {value}
      <MoreButton />
    </div>
  )
}

function QuantityPanel() {
  const [split, setSplit] = useState(false)
  const cell = "border-b border-r border-[#dadada] font-normal"

  return (
    <section className="shrink-0 bg-white pb-[21px]">
      <div className="flex h-1 pl-[675px]">
        <div className="flex w-[100px] justify-center bg-[#5f6b78]"><Caret className="h-1 w-1.5 text-[#c8cdd2]" /></div>
      </div>
      <div className="h-3 border-y border-l border-[#d6d6d6] bg-[#e8e8e8]" />
      <div className="h-[22px] border-b border-l border-[#d6d6d6] bg-[#f1f1f1] pl-2 leading-[21px] text-[#808080]">明细量表</div>
      <div className="flex h-[31px] items-start gap-[6px] pl-[3px] pt-[5px]">
        <button className="flex h-[22px] items-center gap-1 rounded bg-[#c3d9f2] pl-[3px] pr-1">
          <Icon name="exitBox" />
          退出框选
        </button>
        <label className="flex items-center gap-[3px] leading-[18px]">
          <input
            type="checkbox"
            checked={split}
            onChange={(e) => setSplit(e.target.checked)}
            className="h-3.5 w-3.5 appearance-none rounded-xs border border-[#777] bg-white checked:bg-[#1a73e8]"
          />
          按楼层拆分工程量
        </label>
      </div>
      <div className="flex pl-0.5">
        <button className="h-[21px] rounded-t border-x border-t border-[#c4c6cc] px-[6px] text-[#1a73e8]">管线工程量</button>
        <div className="flex-1 border-b border-[#c4c6cc]" />
      </div>
      <div className="ml-0.5 h-[123px] border-b border-l border-[#c4c6cc] pl-[9px] pt-[10px]">
        <div className="h-[102px] border-b border-l border-t border-[#dadada]">
          <table className="table-fixed border-collapse text-center leading-[16px]">
            <colgroup>
              <col className="w-[20px]" />
              <col className="w-[78px]" />
              <col className="w-[121px]" />
              <col className="w-[42px]" />
              <col className="w-[106px]" />
              <col className="w-[106px]" />
              <col className="w-[99px]" />
              <col className="w-[99px]" />
            </colgroup>
            <thead>
              <tr className="h-[21px]">
                <th className={cell} />
                <th className={cell}>计算项</th>
                <th className={cell}>规格型号</th>
                <th className={cell}>单位</th>
                <th className={cell}>工程总量</th>
                <th className={cell}>水平量</th>
                <th className={cell}>竖直量</th>
                <th className="border border-[#6ea8e8] bg-[#80b9f9] font-medium text-white">水平桥架内量</th>
              </tr>
            </thead>
            <tbody>
              {QTY.map((q) => (
                <tr key={q.no} className="h-[21px]">
                  <td className={q.tray ? "bg-[#80b9f9] font-medium text-white" : cell}>{q.no}</td>
                  <td className={cell}>{q.item}</td>
                  <td className={cell}>{q.spec}</td>
                  <td className={cell}>m</td>
                  <td className={`${cell} pl-[5px] text-left`}>{q.total}</td>
                  <td className={cell}><MoreCell value={q.horizontal} /></td>
                  <td className={cell}><MoreCell value={q.vertical} /></td>
                  <td className={q.tray ? "border-2 border-[#808080]" : cell}>
                    {q.tray && <MoreCell value={q.tray} />}
                  </td>
                </tr>
              ))}
            </tbody>
          </table>
        </div>
      </div>
    </section>
  )
}

/* -----------------------------
   Status bar
----------------------------- */
const STATUS_TOOLS = [
  { icon: "magnet", on: true },
  { icon: "ortho" },
  { icon: "rectSel", on: true, menu: true },
  { icon: "cube", menu: true },
  { icon: "cross" },
  { icon: "angle", menu: true },
  { icon: "plusBar", menu: true },
  { icon: "layerSel", on: true },
  { icon: "polySel" },
]

function StatusBar() {
  const [brightness, setBrightness] = useState(30)

  return (
    <footer className="flex h-[31px] shrink-0 items-center bg-[#fbfbfb] pl-0.5">
      <span className="w-[120px]">层高：3.2</span>
      <span className="w-[140px]">底标高：0</span>
      <span className="w-[110px]">选中图元：0</span>
      <span className="w-[110px]">隐藏图元：0</span>
      <div className="flex gap-[3px]">
        {STATUS_TOOLS.map((t) => (
          <button
            key={t.icon}
            aria-label={t.icon}
            className={`flex h-[25px] items-center justify-center gap-[5px] rounded-xs border ${t.menu ? "w-9" : "w-[25px]"} ${
              t.on ? "border-[#2f7fe6] bg-[#d4e5fb]" : "border-[#9a9a9a] bg-white"
            }`}
          >
            <Icon name={t.icon} />
            {t.menu && <Caret className="h-1 w-1.5 text-[#555b66]" />}
          </button>
        ))}
      </div>
      <label htmlFor="brightness" className="ml-[6px] w-28 whitespace-nowrap">CAD图亮度：{brightness}%</label>
      <button aria-label="降低" className="flex h-[25px] w-[25px] items-center justify-center rounded-xs border border-[#8a8a8a] bg-white">
        <Icon name="zoomOut" />
      </button>
      <input
        id="brightness"
        type="range"
        min="0"
        max="100"
        value={brightness}
        onChange={(e) => setBrightness(Number(e.target.value))}
        className="h-0.5 w-[45px] appearance-none bg-[#c8c8c8] [&::-webkit-slider-thumb]:h-[18px] [&::-webkit-slider-thumb]:w-[9px] [&::-webkit-slider-thumb]:appearance-none [&::-webkit-slider-thumb]:rounded-xs [&::-webkit-slider-thumb]:border [&::-webkit-slider-thumb]:border-[#4b5468] [&::-webkit-slider-thumb]:bg-white"
      />
      <button aria-label="提高" className="flex h-[25px] w-[25px] items-center justify-center rounded-xs border border-[#8a8a8a] bg-white">
        <Icon name="zoomIn" />
      </button>
    </footer>
  )
}

export default function App() {
  return (
    <div className="flex h-screen flex-col overflow-hidden bg-white font-['Noto_Sans','Noto_Sans_CJK_SC',sans-serif] text-[12px] leading-[16px] text-[#333]">
      <header className="flex h-[18px] shrink-0 border-b border-[#f0f0f0]">
        <svg viewBox="0 0 50 18" className="h-[18px] w-[50px] shrink-0">
          <path d="M10 3c-2 4 0 7 4 6 5-1 6-6 11-6 4 0 5 5 9 5 5 0 6-4 3-6L34 0h-7c-3 3-9 5-13 5-2 0-3-1-4-2z" fill="#5a57c4" />
          <path d="M17 0h11c-4 3-8 6-13 6-3 0-4-2-2-3z" fill="#7b79dc" />
          <path d="M43 10v4h-4z" fill="#555" />
        </svg>
        {MENU.map((m) => (
          <button
            key={m}
            className={
              m === "建模"
                ? "h-[18px] rounded-b-lg bg-[#1b8cff] px-[13px] leading-[16px] text-white"
                : "h-[17px] px-[13px] leading-[16px]"
            }
          >
            {m}
          </button>
        ))}
      </header>

      <Ribbon />
      <FilterBar />

      <main className="flex min-h-0 flex-1">
        <NavColumn />
        <div className="ml-1 flex w-[400px] shrink-0 flex-col">
          <ComponentPanel />
          <PropertyPanel />
        </div>
        <div className="w-1 shrink-0 pt-[254px]">
          <div className="flex h-[100px] items-center bg-[#5f6b78]">
            <svg viewBox="0 0 4 6" className="h-1.5 w-1" fill="#c8cdd2"><path d="M4 0v6L0 3z" /></svg>
          </div>
        </div>
        <div className="flex min-w-0 flex-1 flex-col">
          <Viewport />
          <QuantityPanel />
        </div>
      </main>

      <StatusBar />

      {/* desktop strip under the window */}
      <div className="flex h-2 shrink-0 bg-[#150f10]">
        <div className="w-12 bg-[#1c1c1c]" />
        <div className="w-[287px] border-t border-[#b8b8b8] bg-[#f0f0f0]" />
        <div className="ml-1 w-12 bg-[#5a4a4a]" />
        <div className="flex-1 bg-linear-to-r from-[#200f10] via-[#1a1416] to-[#0c0c0e]" />
      </div>
    </div>
  )
}
